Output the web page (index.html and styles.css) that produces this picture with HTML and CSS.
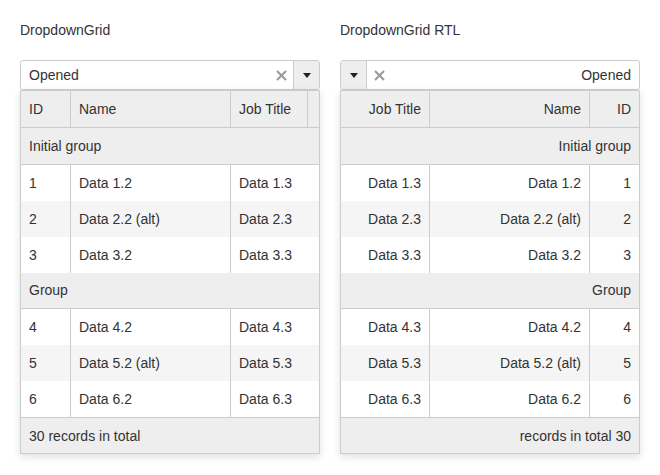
FILE: index.html
```html
<!DOCTYPE html>
<html>
<head>
<meta charset="utf-8">
<link rel="stylesheet" href="styles.css">
</head>
<body>
<div class="page">
  <section class="demo">
    <div class="title">DropdownGrid</div>
    <div class="combo">
      <div class="combo-text">Opened</div>
      <span class="clear"><svg width="11" height="11" viewBox="0 0 11 11"><path d="M1 1L10 10M10 1L1 10" stroke="#999" stroke-width="2" fill="none"/></svg></span>
      <span class="toggle"><svg width="8" height="5" viewBox="0 0 8 5"><polygon points="0,0 8,0 4,5" fill="#222"/></svg></span>
    </div>
    <div class="grid">
      <div class="row head with-scroll"><div class="cell">ID</div><div class="cell">Name</div><div class="cell">Job Title</div><div class="cell"></div></div>
      <div class="row group"><div class="cell">Initial group</div></div>
      <div class="row"><div class="cell">1</div><div class="cell">Data 1.2</div><div class="cell">Data 1.3</div></div>
      <div class="row alt"><div class="cell">2</div><div class="cell">Data 2.2 (alt)</div><div class="cell">Data 2.3</div></div>
      <div class="row"><div class="cell">3</div><div class="cell">Data 3.2</div><div class="cell">Data 3.3</div></div>
      <div class="row group"><div class="cell">Group</div></div>
      <div class="row"><div class="cell">4</div><div class="cell">Data 4.2</div><div class="cell">Data 4.3</div></div>
      <div class="row alt"><div class="cell">5</div><div class="cell">Data 5.2 (alt)</div><div class="cell">Data 5.3</div></div>
      <div class="row"><div class="cell">6</div><div class="cell">Data 6.2</div><div class="cell">Data 6.3</div></div>
      <div class="footer">30 records in total</div>
    </div>
  </section>
  <section class="demo" dir="rtl">
    <div class="title" dir="ltr">DropdownGrid RTL</div>
    <div class="combo">
      <div class="combo-text">Opened</div>
      <span class="clear"><svg width="11" height="11" viewBox="0 0 11 11"><path d="M1 1L10 10M10 1L1 10" stroke="#999" stroke-width="2" fill="none"/></svg></span>
      <span class="toggle"><svg width="8" height="5" viewBox="0 0 8 5"><polygon points="0,0 8,0 4,5" fill="#222"/></svg></span>
    </div>
    <div class="grid">
      <div class="row head"><div class="cell">ID</div><div class="cell">Name</div><div class="cell">Job Title</div></div>
      <div class="row group"><div class="cell">Initial group</div></div>
      <div class="row"><div class="cell">1</div><div class="cell">Data 1.2</div><div class="cell">Data 1.3</div></div>
      <div class="row alt"><div class="cell">2</div><div class="cell">Data 2.2 (alt)</div><div class="cell">Data 2.3</div></div>
      <div class="row"><div class="cell">3</div><div class="cell">Data 3.2</div><div class="cell">Data 3.3</div></div>
      <div class="row group"><div class="cell">Group</div></div>
      <div class="row"><div class="cell">4</div><div class="cell">Data 4.2</div><div class="cell">Data 4.3</div></div>
      <div class="row alt"><div class="cell">5</div><div class="cell">Data 5.2 (alt)</div><div class="cell">Data 5.3</div></div>
      <div class="row"><div class="cell">6</div><div class="cell">Data 6.2</div><div class="cell">Data 6.3</div></div>
      <div class="footer">30 records in total</div>
    </div>
  </section>
</div>
</body>
</html>
```

FILE: styles.css
```css
html, body {
  margin: 0;
  padding: 0;
  background: #fff;
}
body {
  font-family: "Liberation Sans", Arial, sans-serif;
  font-size: 14px;
  color: #333;
}
.page {
  display: flex;
  gap: 20px;
  padding: 20px;
}
.demo {
  width: 300px;
  display: flex;
  flex-direction: column;
}
.demo[dir="rtl"] .title {
  text-align: left;
}
.title {
  line-height: 20px;
  height: 20px;
  margin-bottom: 20px;
}
.combo {
  display: flex;
  height: 30px;
  box-sizing: border-box;
  border: 1px solid #ccc;
  border-radius: 3px;
  background: #fff;
  overflow: hidden;
}
.combo-text {
  flex: 1;
  display: flex;
  align-items: center;
  padding: 0 8px;
}
.clear {
  width: 24px;
  display: flex;
  align-items: center;
  justify-content: center;
}
.toggle {
  width: 25px;
  border-inline-start: 1px solid #ccc;
  background: #eee;
  display: flex;
  align-items: center;
  justify-content: center;
}
.grid {
  border: 1px solid #ccc;
  background: #fff;
  box-shadow: 0 3px 8px rgba(0, 0, 0, 0.12);
}
.row {
  display: grid;
  grid-template-columns: 49px 160px 1fr;
  height: 36px;
  box-sizing: border-box;
}
.row.with-scroll {
  grid-template-columns: 49px 160px 1fr 12px;
}
.row.alt {
  background: #f5f5f5;
}
.row.head {
  height: 37px;
  background: #eee;
  border-bottom: 1px solid #ccc;
}
.row.group {
  height: 36.5px;
  grid-template-columns: 1fr;
  background: #eee;
  border-bottom: 1px solid #ccc;
}
.cell {
  display: flex;
  align-items: center;
  padding: 0 8px;
  white-space: nowrap;
  overflow: hidden;
}
.row:not(.group) .cell + .cell {
  border-inline-start: 1px solid #ccc;
}
.footer {
  height: 36px;
  box-sizing: border-box;
  border-top: 1px solid #ccc;
  background: #eee;
  display: flex;
  align-items: center;
  padding: 0 8px;
}
```
